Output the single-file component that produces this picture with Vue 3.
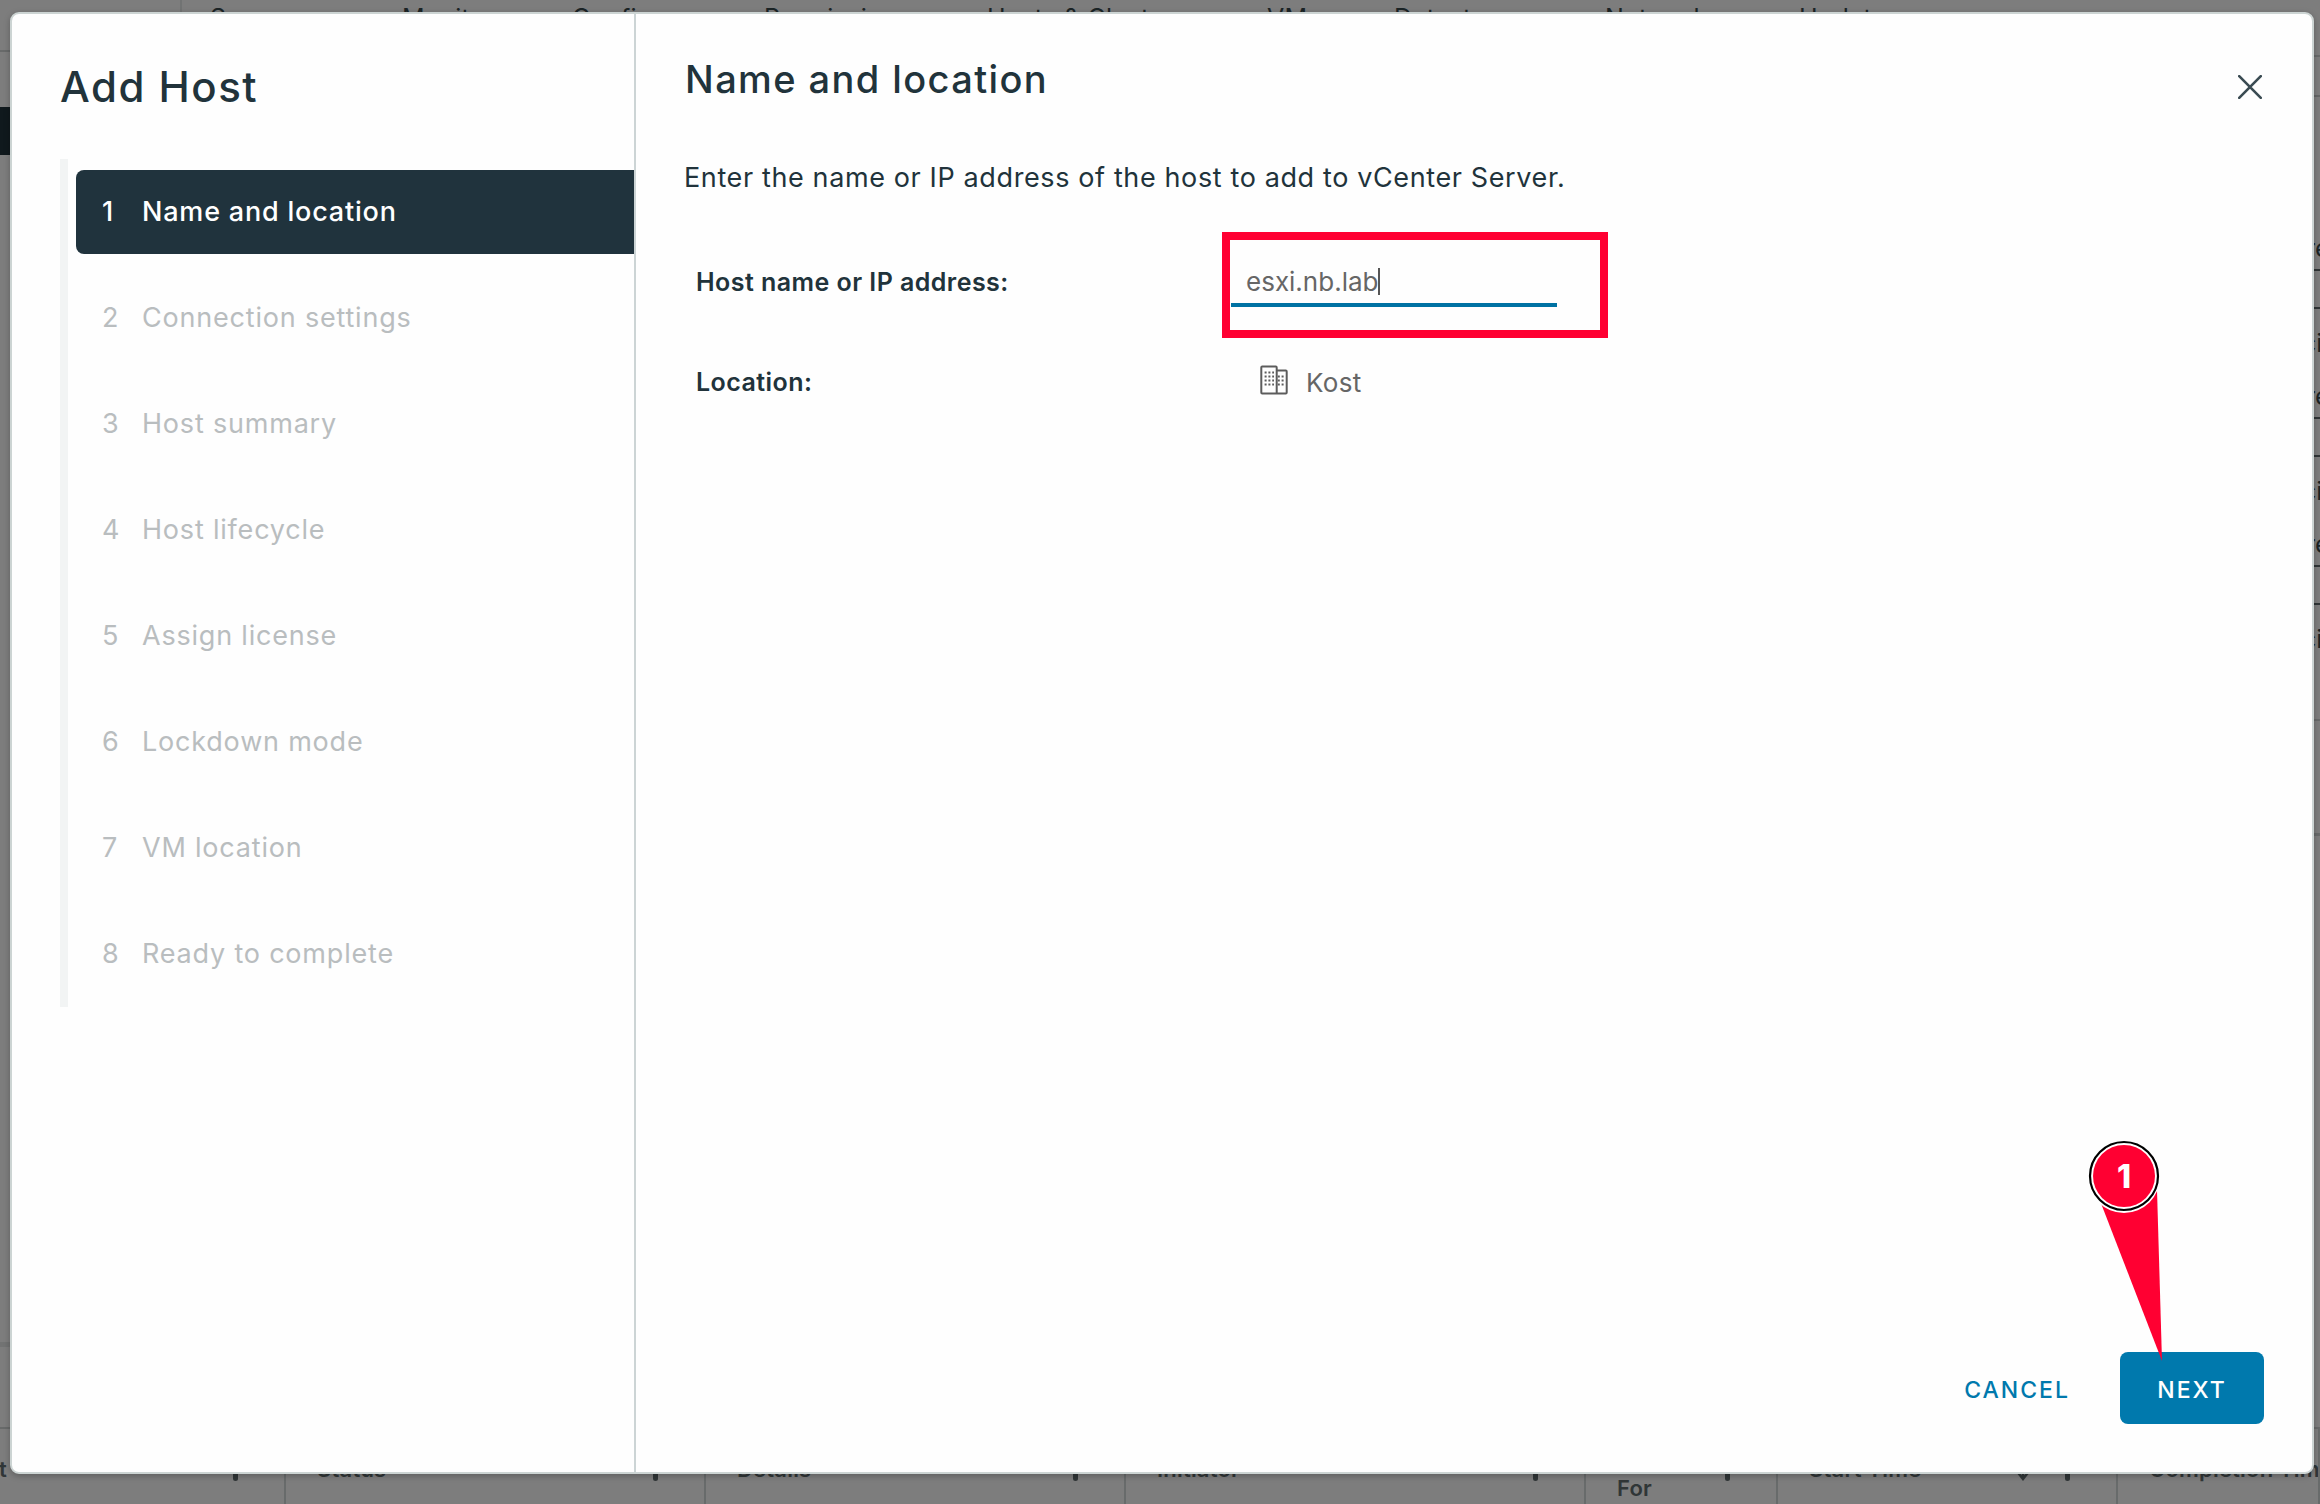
<template>
  <div class="screen">
    <!-- dimmed page behind the dialog -->
    <div class="page">
      <div class="tabs">
        <span v-for="tab in tabs" :key="tab.label" class="tab" :style="{ width: tab.width + 'px' }">{{ tab.label }}</span>
      </div>
      <div class="page-body">
        <div class="tree">
          <div class="tree-selected"></div>
          <div class="tree-end"></div>
        </div>
        <div class="details">
          <div class="details-head"></div>
          <div v-for="n in 3" :key="n" class="details-card">
            <div class="fragment top">re</div>
            <div class="gap"></div>
            <div class="fragment bottom">ci</div>
          </div>
          <div class="details-rest"></div>
        </div>
      </div>
      <div class="tasks">
        <div v-for="col in columns" :key="col.label" class="task-col">
          <span class="task-label" :class="{ wrapped: col.second, first: col.label === 't' }">
            {{ col.label }}<br v-if="col.second">{{ col.second }}
          </span>
          <svg v-if="col.sorted" class="sort" viewBox="0 0 16 24">
            <path d="M8 0V22M1 13L8 22L15 13" />
          </svg>
          <span v-if="col.filter" class="filter"></span>
        </div>
      </div>
    </div>

    <div class="modal">
      <aside class="sidebar">
        <h1 class="title">Add Host</h1>
        <ol class="steps">
          <li v-for="(step, i) in steps" :key="step" class="step" :class="{ active: i === current }">
            <span class="step-number">{{ i + 1 }}</span>
            <span class="step-name">{{ step }}</span>
          </li>
        </ol>
      </aside>

      <main class="content">
        <header class="content-header">
          <h2 class="heading">Name and location</h2>
          <button class="close" aria-label="Close">
            <svg viewBox="0 0 24 24"><path d="M1.2 1.2L22.8 22.8M22.8 1.2L1.2 22.8" /></svg>
          </button>
        </header>
        <p class="intro">Enter the name or IP address of the host to add to vCenter Server.</p>

        <div class="fields">
          <div class="field">
            <label class="field-label">Host name or IP address:</label>
            <div class="input">
              <span class="input-text">{{ hostName }}</span><span class="caret"></span>
            </div>
            <div class="highlight"></div>
          </div>
          <div class="field">
            <label class="field-label">Location:</label>
            <div class="location">
              <svg class="datacenter" viewBox="0 0 28 30">
                <path class="outline" d="M17 28.5H2.2Q1.3 28.5 1.3 27.6V2.4Q1.3 1.5 2.2 1.5H15.8Q16.7 1.5 16.7 2.4V28.5H25.8Q26.7 28.5 26.7 27.6V6.4Q26.7 5.5 25.8 5.5H16.7" />
                <path class="windows" d="M4.6 7.5H14M4.6 11.5H14M4.6 15.5H14M4.6 19.5H14" />
                <path class="windows" d="M17.8 11.5H24M17.8 15.5H24M17.8 19.5H24" />
              </svg>
              <span class="location-name">Kost</span>
            </div>
          </div>
        </div>

        <footer class="actions">
          <button class="btn cancel">CANCEL</button>
          <button class="btn next">NEXT</button>
        </footer>
      </main>
    </div>

    <div class="marker">
      <svg class="pointer" viewBox="0 0 72 222">
        <path class="tail" d="M12.5 62L69 50L74 221Z" />
        <circle class="halo" cx="36" cy="37" r="36" />
        <circle class="ring" cx="36" cy="36" r="34" />
        <circle class="dot" cx="36" cy="36" r="31" />
      </svg>
      <span class="marker-number">1</span>
    </div>
  </div>
</template>

<script setup>
import { ref } from 'vue'

const current = ref(0)
const hostName = ref('esxi.nb.lab')

const steps = [
  'Name and location',
  'Connection settings',
  'Host summary',
  'Host lifecycle',
  'Assign license',
  'Lockdown mode',
  'VM location',
  'Ready to complete'
]

const tabs = [
  { label: 'Summary', width: 192 },
  { label: 'Monitor', width: 170 },
  { label: 'Configure', width: 192 },
  { label: 'Permissions', width: 223 },
  { label: 'Hosts & Clusters', width: 280 },
  { label: 'VMs', width: 127 },
  { label: 'Datastores', width: 211 },
  { label: 'Networks', width: 194 },
  { label: 'Updates', width: 120 }
]

const columns = [
  { label: 't', filter: true },
  { label: 'Status', filter: true },
  { label: 'Details', filter: true },
  { label: 'Initiator', filter: true },
  { label: 'Queued', second: 'For', filter: true },
  { label: 'Start Time', sorted: true, filter: true },
  { label: 'Completion Time' }
]
</script>

<style>
html, body {
  margin: 0;
  overflow: hidden;
}
</style>

<style scoped>
.screen {
  position: relative;
  width: 2320px;
  height: 1504px;
  overflow: hidden;
  font-family: Inter, "Open Sans", sans-serif;
  color: #21333b;
}

/* page */
.page {
  display: flex;
  flex-direction: column;
  height: 100%;
  background: #7d7d7d;
  color: #1b2426;
}

.tabs {
  display: flex;
  height: 50px;
  box-sizing: border-box;
  padding-left: 28px;
  margin-left: 180px;
  border-left: 2px solid #717373;
  font-size: 25px;
  line-height: 37px;
  letter-spacing: 0.3px;
  white-space: nowrap;
}

.tab {
  flex: none;
}

.page-body {
  flex: 1;
  display: flex;
  justify-content: space-between;
}

.tree {
  width: 10px;
  display: flex;
  flex-direction: column;
  border-top: 2px solid #686a6a;
}

.tree-selected {
  height: 48px;
  margin-top: 55px;
  background: #10191d;
}

.tree-end {
  margin-top: auto;
  height: 80px;
  border-top: 5px solid #727373;
}

.details {
  width: 6px;
  display: flex;
  flex-direction: column;
  overflow: hidden;
  margin-top: 5px;
  border-top: 2px solid #686a6a;
}

.details-head {
  height: 38px;
  flex: none;
  margin-bottom: 102px;
  border-bottom: 2px solid #646666;
}

.details-card {
  flex: none;
  font-size: 25px;
}

.gap {
  height: 36px;
  border-top: 2px solid #303536;
  border-bottom: 2px solid #303536;
}

.fragment.top {
  height: 70px;
  margin-left: -8px;
  line-height: 98px;
}

.fragment.bottom {
  height: 38px;
  margin-left: -12px;
  line-height: 68px;
}

.details-rest {
  height: 112px;
  flex: none;
  margin-top: 76px;
  border-top: 2px solid #686a6a;
  border-bottom: 3px solid #686a6a;
}

.tasks {
  display: grid;
  grid-template-columns: 286px 420px 420px 460px 192px 340px 1fr;
  height: 77px;
  flex: none;
  box-sizing: border-box;
  border-top: 2px solid #686a6a;
}

.task-col {
  display: flex;
  overflow: hidden;
  padding: 0 46px 0 31px;
  border-right: 2px solid #686b6b;
  font-size: 22px;
  font-weight: 600;
  line-height: 80px;
  letter-spacing: 0.2px;
  white-space: nowrap;
  color: #303637;
}

.task-col:last-child {
  padding-right: 0;
}

.task-label.wrapped {
  padding-top: 14px;
  line-height: 30px;
}

.task-label.first {
  margin-left: -32px;
}

.filter {
  width: 5px;
  height: 14px;
  margin-top: 38px;
  margin-left: auto;
  border-radius: 0 0 3px 3px;
  background: #303637;
}

.sort {
  width: 16px;
  height: 24px;
  margin: 28px 0 0 auto;
  fill: none;
  stroke: #303637;
  stroke-width: 2.5;
}

.sort + .filter {
  margin-left: 34px;
}

/* dialog */
.modal {
  position: absolute;
  top: 12px;
  left: 10px;
  display: flex;
  width: 2304px;
  height: 1462px;
  box-sizing: border-box;
  border: 2px solid #ccd4d3;
  border-radius: 9px;
  background: #fefefe;
  box-shadow: 0 2px 6px rgba(0, 0, 0, 0.25);
}

.sidebar {
  width: 624px;
  flex: none;
  box-sizing: border-box;
  padding: 43px 0 0 48px;
  border-right: 2px solid #ccd4d5;
}

.title {
  margin: 0;
  font-size: 42px;
  font-weight: 450;
  line-height: 59px;
  letter-spacing: 1.5px;
}

.steps {
  margin: 43px 0 0;
  padding: 11px 0 11px 8px;
  border-left: 8px solid #f2f4f4;
  list-style: none;
}

.step {
  display: flex;
  align-items: center;
  height: 84px;
  box-sizing: border-box;
  padding: 0 0 2px 26px;
  border-radius: 8px 0 0 8px;
  font-size: 27px;
  letter-spacing: 0.8px;
  color: #b9bdbf;
}

.step + .step {
  margin-top: 22px;
}

.step.active {
  background: #20333d;
  color: #fff;
  font-weight: 500;
}

.step-number {
  width: 40px;
}

.content {
  flex: 1;
  display: flex;
  flex-direction: column;
  padding: 40px 48px 48px;
}

.content-header {
  display: flex;
  justify-content: space-between;
  align-items: flex-start;
}

.heading {
  margin: 0 0 0 1px;
  font-size: 38px;
  font-weight: 500;
  line-height: 50px;
  letter-spacing: 1.4px;
}

.close {
  margin: 21px 2px 0 0;
  padding: 0;
  border: 0;
  background: none;
}

.close svg {
  display: block;
  width: 24px;
  height: 24px;
  fill: none;
  stroke: #3a4b52;
  stroke-width: 2.6;
  stroke-linecap: round;
}

.intro {
  margin: 54px 0 34px;
  font-size: 27px;
  line-height: 40px;
  letter-spacing: 0.62px;
}

.fields {
  margin-left: 11px;
}

.field {
  position: relative;
  display: flex;
  align-items: center;
  height: 100px;
}

.field-label {
  width: 535px;
  padding-left: 1px;
  font-size: 25px;
  font-weight: 600;
  letter-spacing: 0.45px;
}

.input {
  display: flex;
  align-items: center;
  width: 326px;
  height: 48px;
  box-sizing: border-box;
  margin-bottom: -2px;
  padding-left: 15px;
  border-bottom: 4px solid #0072a3;
  color: #666;
  font-size: 26px;
}

.caret {
  width: 2px;
  height: 27px;
  background: #555;
}

/* red frame drawn over the host name input */
.highlight {
  position: absolute;
  top: 0;
  left: 527px;
  width: 386px;
  height: 106px;
  box-sizing: border-box;
  border: 8px solid #ff0032;
}

.location {
  display: flex;
  align-items: center;
  gap: 18px;
  margin: 1px 0 0 29px;
  color: #666;
  font-size: 26px;
}

.datacenter {
  width: 28px;
  height: 30px;
  margin-top: -6px;
  fill: none;
  stroke: #5c5c5c;
}

.location-name {
  letter-spacing: 0.3px;
}

.outline {
  stroke-width: 2;
}

.windows {
  stroke-width: 2;
  stroke-dasharray: 2 1.8;
}

.actions {
  display: flex;
  justify-content: flex-end;
  align-items: center;
  margin-top: auto;
}

.btn {
  height: 72px;
  padding: 3px 0 0;
  border: 0;
  border-radius: 8px;
  background: none;
  font-family: inherit;
  font-size: 23px;
  font-weight: 500;
  letter-spacing: 2px;
}

.cancel {
  margin-right: 50px;
  color: #0079ad;
}

.next {
  width: 144px;
  background: #0079ad;
  color: #fff;
}

/* numbered pointer */
.marker {
  position: absolute;
  top: 1140px;
  left: 2088px;
  width: 72px;
  height: 72px;
}

.pointer {
  width: 72px;
  height: 222px;
  overflow: visible;
}

.tail {
  fill: #ff0032;
}

.halo {
  fill: #fff;
}

.ring {
  fill: #fff;
  stroke: #000;
  stroke-width: 2.2;
}

.dot {
  fill: #ff0032;
}

.marker-number {
  position: absolute;
  inset: 0;
  color: #fff;
  font-size: 32px;
  font-weight: 800;
  line-height: 74px;
  text-align: center;
}
</style>
